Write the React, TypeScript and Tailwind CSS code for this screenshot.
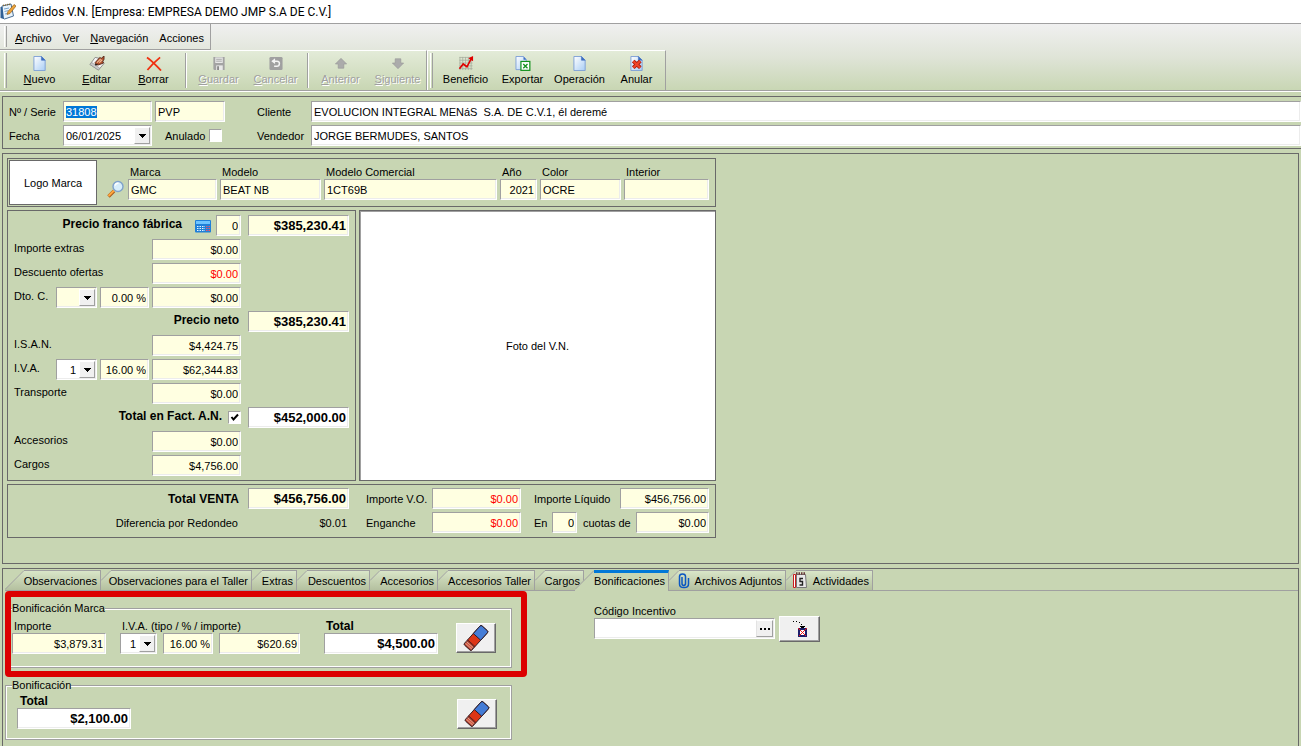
import { useEffect, useRef, type ReactNode } from "react";

const FIELD =
  "block h-[21px] rounded-none border border-t-[#a0a0a0] border-l-[#a0a0a0] border-r-white border-b-white px-0.5 py-0 outline-none shadow-[inset_-1px_-1px_0_#ececec] selection:bg-[#0078d7] selection:text-white";
const PANEL = "border border-[#696969]";

type FieldProps = {
  label: string;
  value?: string;
  width: string;
  tone?: string;
  align?: string;
  id?: string;
};

function Field({ label, value = "", width, tone = "bg-[#ffffe1]", align = "text-right", id }: FieldProps) {
  return (
    <input id={id} aria-label={id ? undefined : label} defaultValue={value} className={`${FIELD} ${width} ${tone} ${align}`} />
  );
}

function Combo({
  label,
  options,
  width,
  tone = "bg-white",
  align = "[text-align-last:right]",
  id,
}: {
  label: string;
  options: string[];
  width: string;
  tone?: string;
  align?: string;
  id?: string;
}) {
  return (
    <div className={`relative ${width}`}>
      <select id={id} aria-label={id ? undefined : label} className={`${FIELD} w-full appearance-none pr-5 ${tone} ${align}`}>
        {options.map((o) => (
          <option key={o}>{o}</option>
        ))}
      </select>
      <span className="pointer-events-none absolute top-0.5 right-0.5 flex h-[17px] w-4 items-center justify-center border border-t-white border-l-white border-r-[#a0a0a0] border-b-[#a0a0a0] bg-[#f0f0f0]">
        <svg width="7" height="4" shapeRendering="crispEdges">
          <path d="M0 0h7v1H6v1H5v1H4v1H3V3H2V2H1V1H0z" fill="#000" />
        </svg>
      </span>
    </div>
  );
}

function Check({ id, checked = false }: { id: string; checked?: boolean }) {
  return (
    <span className="relative block size-[13px]">
      <input
        id={id}
        type="checkbox"
        defaultChecked={checked}
        className="peer block size-[13px] appearance-none border border-t-[#a0a0a0] border-l-[#a0a0a0] border-r-white border-b-white bg-white"
      />
      <svg className="pointer-events-none absolute inset-0 hidden peer-checked:block" width="13" height="13">
        <path d="M3.500 6L5.500 8.500L10 3.500" fill="none" stroke="#000" strokeWidth="2" />
      </svg>
    </span>
  );
}

function PageShape() {
  return (
    <g>
      <path d="M1.500 .5h8l4 4v11h-12z" fill="url(#sheet)" stroke="#7d9fd6" />
      <path d="M9.500 .5v4h4z" fill="#3f6fc0" stroke="#3f6fc0" strokeWidth=".6" />
    </g>
  );
}

function Svg16({ children }: { children: ReactNode }) {
  return (
    <svg width="16" height="16" viewBox="0 0 16 16" aria-hidden="true">
      <defs>
        <linearGradient id="sheet" x1="0" y1="0" x2="1" y2="1">
          <stop offset="0" stopColor="#ffffff" />
          <stop offset="1" stopColor="#a9cdf5" />
        </linearGradient>
      </defs>
      {children}
    </svg>
  );
}

const icons = {
  nuevo: <PageShape />,
  editar: (
    <>
      <path d="M6 1.500L13 3l2.500 5L9.500 15L.5 9z" fill="#f4f4f4" stroke="#8b8b8b" />
      <path d="M.5 9l9 6 1.500-2L2.500 7z" fill="#c9c9c9" stroke="#8b8b8b" strokeWidth=".6" />
      <path d="M6.500 9.500l-.5-2.500L11 1.500l1.500 1L15.500 0v3.500L14 6l1 1.500L9.500 9.500z" fill="#b5532f" stroke="#4e2518" strokeWidth=".9" />
      <path d="M8 7l4-4M10.500 7l3-3" stroke="#f2bd98" strokeWidth="1.200" />
      <path d="M6 9.500l2.500-1" stroke="#222" strokeWidth="1.200" />
    </>
  ),
  borrar: <path d="M.5 1.500C6 5 10 10 15.500 15.500M14.500 1.500C9 6 5 10 1 15" fill="none" stroke="#f03010" strokeWidth="1.900" />,
  guardar: (
    <>
      <path d="M2 1h12v14H3l-1-1z" fill="#a3a3a3" />
      <path d="M4 1.500h8v6H4z" fill="#e8e8e8" />
      <path d="M5 3.500h6M5 5.500h6" stroke="#a3a3a3" />
      <path d="M5 10h7v5H5z" fill="#e8e8e8" />
      <path d="M6 11h2v4H6z" fill="#8a8a8a" />
    </>
  ),
  cancelar: (
    <>
      <rect x="1" y="1" width="14" height="14" rx="1.500" fill="#a0a0a0" />
      <path d="M4.500 5.500h4.500c4 0 3 5.500 0 5.500H6" fill="none" stroke="#f4f4f4" strokeWidth="1.600" />
      <path d="M3 5.500L7 2.500v6z" fill="#f4f4f4" />
    </>
  ),
  anterior: <path d="M8 2.500l6 6h-3V13H5V8.500H2z" fill="#ababab" stroke="#999" strokeWidth=".7" />,
  siguiente: <path d="M8 13.500l6-6h-3V3H5v4.500H2z" fill="#ababab" stroke="#999" strokeWidth=".7" />,
  beneficio: (
    <>
      <path d="M1 1.500h14M1 4.500h14M1 7.500h14M1 10.500h14M1 13.500h14M1.500 1v14M4.500 1v14M7.500 1v14M10.500 1v14M13.500 1v14" stroke="#a5ab9c" strokeWidth=".8" />
      <path d="M1 13.500L5 8.500l4 3L13.500 3" fill="none" stroke="#e00000" strokeWidth="1.800" />
      <path d="M15.500 0v5.500L10.500 2.500z" fill="#e00000" />
    </>
  ),
  exportar: (
    <>
      <path d="M.5 .5h8l3 3v11H.5z" fill="url(#sheet)" stroke="#7d9fd6" />
      <path d="M8.500 .5v3.500h3z" fill="#3f6fc0" />
      <rect x="5.800" y="5.800" width="9.500" height="9.500" fill="#fff" stroke="#12911c" strokeWidth="1.300" />
      <path d="M8.300 8.500l4.500 4.500M12.800 8.500L8.300 13" stroke="#12911c" strokeWidth="1.400" />
    </>
  ),
  operacion: <PageShape />,
  anular: (
    <>
      <PageShape />
      <path d="M4 5.500l7.500 7M11.500 5.500L4 12.500" stroke="#9c160b" strokeWidth="4" />
      <path d="M4 5.500l7.500 7M11.500 5.500L4 12.500" stroke="#f04427" strokeWidth="2.400" />
    </>
  ),
};

function Tool({ icon, text, accel = true, disabled = false }: { icon: ReactNode; text: string; accel?: boolean; disabled?: boolean }) {
  return (
    <button
      type="button"
      disabled={disabled}
      className={`flex h-9 w-[57px] flex-col items-center pt-[5px] ${disabled ? "text-[#a0a0a0] [text-shadow:1px_1px_0_#fff]" : "text-black"}`}
    >
      <Svg16>{icon}</Svg16>
      <span className="leading-4">{accel ? <><u>{text[0]}</u>{text.slice(1)}</> : text}</span>
    </button>
  );
}

function Grip() {
  return <span className="my-0.5 w-[3px] self-stretch border-r border-l border-l-white border-r-[#a0a0a0]" />;
}

function Separator() {
  return <span className="mx-[3px] my-0.5 w-0.5 self-stretch border-r border-l border-l-[#a0a0a0] border-r-white" />;
}

function MenuBar() {
  return (
    <nav className="flex h-[26px] w-[211px] items-center border-r border-b border-[#a0a0a0] pl-1 leading-4">
      <Grip />
      <div className="flex gap-[11px] pt-[3px] pl-2">
        <a href="#archivo"><u>A</u>rchivo</a>
        <a href="#ver">Ver</a>
        <a href="#navegacion"><u>N</u>avegación</a>
        <a href="#acciones">Acciones</a>
      </div>
    </nav>
  );
}

function ToolBars() {
  return (
    <div className="flex h-[41px] border-b border-[#a0a0a0] shadow-[0_1px_0_#fff]">
      <div className="flex items-start border-t border-r border-t-white border-r-[#a0a0a0] bg-linear-to-b from-[#e3ebd8] to-[#c8d6b3] pl-1">
        <Grip />
        <div className="ml-1 flex self-stretch">
          <Tool icon={icons.nuevo} text="Nuevo" />
          <Tool icon={icons.editar} text="Editar" />
          <Tool icon={icons.borrar} text="Borrar" />
          <Separator />
          <Tool icon={icons.guardar} text="Guardar" disabled />
          <Tool icon={icons.cancelar} text="Cancelar" disabled />
          <Separator />
          <Tool icon={icons.anterior} text="Anterior" disabled />
          <Tool icon={icons.siguiente} text="Siguiente" disabled />
        </div>
      </div>
      <div className="flex items-start border-t border-r border-l border-t-white border-r-[#a0a0a0] border-l-white bg-linear-to-b from-[#e3ebd8] to-[#c8d6b3] pl-0.5">
        <Grip />
        <div className="ml-1 flex">
          <Tool icon={icons.beneficio} text="Beneficio" accel={false} />
          <Tool icon={icons.exportar} text="Exportar" accel={false} />
          <Tool icon={icons.operacion} text="Operación" accel={false} />
          <Tool icon={icons.anular} text="Anular" accel={false} />
        </div>
      </div>
    </div>
  );
}

function OrderHeader() {
  const serie = useRef<HTMLInputElement>(null);
  useEffect(() => {
    serie.current?.focus();
    serie.current?.select();
  }, []);
  return (
    <section className="mt-[5px] ml-0.5 flex flex-col gap-[3px] border border-r-0 border-[#696969] pt-1 pb-0.5">
      <div className="flex h-[21px] items-center">
        <label htmlFor="serie" className="w-[60px] pl-1.5">Nº / Serie</label>
        <input id="serie" ref={serie} defaultValue="31808" className={`${FIELD} w-[89px] bg-[#ffffe1]`} />
        <div className="ml-[3px] w-[102px]"><Field label="Tipo" value="PVP" width="w-[70px]" align="text-left" /></div>
        <label htmlFor="cliente" className="w-[54px]">Cliente</label>
        <Field id="cliente" label="Cliente" value="EVOLUCION INTEGRAL MENáS  S.A. DE C.V.1, él deremé" width="flex-1" tone="bg-white" align="text-left" />
      </div>
      <div className="flex h-[21px] items-center">
        <label htmlFor="fecha" className="w-[60px] pl-1.5">Fecha</label>
        <Combo id="fecha" label="Fecha" options={["06/01/2025"]} width="w-[89px]" align="text-left" />
        <div className="ml-[3px] flex w-[102px] items-center gap-1 pl-2.5">
          <label htmlFor="anulado">Anulado</label>
          <Check id="anulado" />
        </div>
        <label htmlFor="vendedor" className="w-[54px]">Vendedor</label>
        <Field id="vendedor" label="Vendedor" value="JORGE BERMUDES, SANTOS" width="flex-1" tone="bg-white" align="text-left" />
      </div>
    </section>
  );
}

function Stacked({ id, label, value, width, align = "text-left" }: { id: string; label: string; value?: string; width: string; align?: string }) {
  return (
    <div>
      <label htmlFor={id} className="block pl-0.5 leading-[14px]">{label}</label>
      <Field id={id} label={label} value={value} width={width} align={align} />
    </div>
  );
}

function Vehicle() {
  return (
    <section className={`flex h-[49px] w-[709px] ${PANEL} p-px`}>
      <div className="flex w-[88px] items-center justify-center border border-[#696969] bg-white">Logo Marca</div>
      <button type="button" aria-label="Buscar vehículo" className="mt-5 ml-2.5 size-[18px]">
        <svg width="18" height="18" viewBox="0 0 18 18">
          <path d="M1.500 16.500L7 11" stroke="#a85a1c" strokeWidth="3.400" />
          <path d="M1.500 16L7 10.500" stroke="#ffa63d" strokeWidth="2" />
          <circle cx="11" cy="6.500" r="5" fill="#d7eefb" stroke="#7fa2cb" strokeWidth="1.400" />
          <path d="M8 5.500c.5-2 2-2.500 3.500-2.300" stroke="#fff" strokeWidth="1.500" fill="none" />
        </svg>
      </button>
      <div className="ml-[3px] flex gap-[3px] pt-[5px]">
        <Stacked id="marca" label="Marca" value="GMC" width="w-[89px]" />
        <Stacked id="modelo" label="Modelo" value="BEAT NB" width="w-[101px]" />
        <Stacked id="comercial" label="Modelo Comercial" value="1CT69B" width="w-[173px]" />
        <Stacked id="anio" label="Año" value="2021" width="w-[37px]" align="text-right" />
        <Stacked id="color" label="Color" value="OCRE" width="w-[81px]" />
        <Stacked id="interior" label="Interior" width="w-[85px]" />
      </div>
    </section>
  );
}

function PriceRow({ label, amount, tone = "text-black", children }: { label: string; amount: string; tone?: string; children?: ReactNode }) {
  return (
    <div className="flex h-6 w-[233px]">
      <span className="flex-1 pl-1.5 leading-[18px]">{label}</span>
      <div className="flex gap-[3px]">
        {children}
        <Field label={label} value={amount} width="w-[89px]" tone={`bg-[#ffffe1] ${tone}`} />
      </div>
    </div>
  );
}

function TotalRow({ label, amount, tone = "bg-[#ffffe1]", children }: { label: ReactNode; amount: string; tone?: string; children?: ReactNode }) {
  return (
    <div className="flex h-6 gap-[7px] font-bold">
      <div className="flex w-[233px] justify-end">
        <span className="pr-0.5 text-xs leading-[18px]">{label}</span>
        {children}
      </div>
      <Field label="Total" value={amount} width="w-[101px] text-[13px] font-bold" tone={tone} />
    </div>
  );
}

function Prices() {
  return (
    <section className={`w-[349px] ${PANEL} pt-1`}>
      <TotalRow label="Precio franco fábrica" amount="$385,230.41">
        <button type="button" aria-label="Calcular" className="mt-0.5 mr-1 ml-2.5 size-[18px]">
          <svg width="18" height="18" viewBox="0 0 18 18">
            <rect x="1" y="3" width="16" height="12.500" rx="1" fill="#1f7fd8" />
            <path d="M2 4h14v3H2z" fill="#6ec4ff" />
            <path d="M3 9.500h8M3 11.500h8M3 13.500h8" stroke="#e6f5ff" strokeWidth="1.200" strokeDasharray="1.500 1" />
            <path d="M12 9.500h4M12 11.500h4M12 13.500h4" stroke="#e8556a" strokeWidth="1.200" strokeDasharray="1.500 1" />
          </svg>
        </button>
        <Field label="Tarifa" value="0" width="w-[25px] font-normal" />
      </TotalRow>
      <PriceRow label="Importe extras" amount="$0.00" />
      <PriceRow label="Descuento ofertas" amount="$0.00" tone="text-[#ff0000]" />
      <PriceRow label="Dto. C." amount="$0.00">
        <Combo label="Tipo de descuento" options={[""]} width="w-[41px]" tone="bg-[#ffffe1]" />
        <Field label="Porcentaje de descuento" value="0.00 %" width="w-[49px]" />
      </PriceRow>
      <TotalRow label="Precio neto" amount="$385,230.41" />
      <PriceRow label="I.S.A.N." amount="$4,424.75" />
      <PriceRow label="I.V.A." amount="$62,344.83">
        <Combo label="Tipo de I.V.A." options={["1"]} width="w-[41px]" />
        <Field label="Porcentaje de I.V.A." value="16.00 %" width="w-[49px]" />
      </PriceRow>
      <PriceRow label="Transporte" amount="$0.00" />
      <TotalRow label={<label htmlFor="factura">Total en Fact. A.N.</label>} amount="$452,000.00" tone="bg-white">
        <span className="mt-1 ml-1"><Check id="factura" checked /></span>
      </TotalRow>
      <PriceRow label="Accesorios" amount="$0.00" />
      <PriceRow label="Cargos" amount="$4,756.00" />
    </section>
  );
}

function Totals() {
  return (
    <section className={`flex h-[54px] w-[709px] flex-col gap-[3px] ${PANEL} pt-[3px]`}>
      <div className="flex h-[21px] items-center">
        <span className="w-[233px] pr-0.5 text-right text-xs font-bold">Total VENTA</span>
        <div className="ml-[7px] w-[118px]"><Field label="Total VENTA" value="$456,756.00" width="w-[101px] text-[13px] font-bold" /></div>
        <label htmlFor="vo" className="w-[66px]">Importe V.O.</label>
        <Field id="vo" label="Importe V.O." value="$0.00" width="w-[89px]" tone="bg-[#ffffe1] text-[#ff0000]" />
        <label htmlFor="liquido" className="ml-[13px] w-[86px]">Importe Líquido</label>
        <Field id="liquido" label="Importe Líquido" value="$456,756.00" width="w-[89px]" />
      </div>
      <div className="flex h-[21px] items-center">
        <span className="w-[233px] pr-[3px] text-right">Diferencia por Redondeo</span>
        <div className="ml-[7px] w-[118px]"><output className="block w-[99px] text-right">$0.01</output></div>
        <label htmlFor="enganche" className="w-[66px]">Enganche</label>
        <Field id="enganche" label="Enganche" value="$0.00" width="w-[89px]" tone="bg-[#ffffe1] text-[#ff0000]" />
        <label htmlFor="cuotas" className="ml-[13px] w-[18px]">En</label>
        <Field id="cuotas" label="Cuotas" value="0" width="w-[25px]" />
        <label htmlFor="cuota" className="ml-1.5 w-[53px]">cuotas de</label>
        <Field id="cuota" label="cuotas de" value="$0.00" width="w-[73px]" />
      </div>
    </section>
  );
}

const tabs = [
  { text: "Observaciones", width: "w-[96px]", wide: true },
  { text: "Observaciones para el Taller", width: "w-[151px]" },
  { text: "Extras", width: "w-[45px]" },
  { text: "Descuentos", width: "w-[73px]" },
  { text: "Accesorios", width: "w-[68px]" },
  { text: "Accesorios Taller", width: "w-[97px]" },
  { text: "Cargos", width: "w-[49px]" },
  { text: "Bonificaciones", width: "-ml-[9px] w-[94px]", active: true, wide: true },
  { text: "Archivos Adjuntos", width: "w-[117px]", icon: "clip" },
  { text: "Actividades", width: "w-[87px]", icon: "agenda" },
];

function Clip() {
  return (
    <svg width="12" height="16" viewBox="0 0 12 16" className="shrink-0">
      <path d="M4 4v6.500c0 2.500 3.500 2.500 3.500 0V3.500c0-3.500-6-3.500-6 0V11c0 4.800 9 4.800 9 0V5" fill="none" stroke="#0b57c2" strokeWidth="1.500" />
    </svg>
  );
}

function Agenda() {
  return (
    <svg width="16" height="17" viewBox="0 0 16 17" className="shrink-0">
      <path d="M1.500 2.500h2v13h-2z" fill="#fff" stroke="#c81e1e" />
      <path d="M4.500 2.500h9l1 13h-10z" fill="#e9e9e9" stroke="#777" />
      <path d="M4 1.500h10" stroke="#6b3a3a" strokeWidth="2.400" strokeDasharray="1.500 1" />
      <path d="M11 6.500H8V9.500h2.500V13H7.500" fill="none" stroke="#222" strokeWidth="1.400" />
    </svg>
  );
}

function Slant({ wide = false, active = false }: { wide?: boolean; active?: boolean }) {
  const w = wide ? 19 : 10;
  return (
    <svg width={w} height="21" className="shrink-0">
      <defs>
        <linearGradient id="tabfill" gradientUnits="userSpaceOnUse" x1="0" y1="0" x2="0" y2="20">
          <stop offset="0" stopColor="#d9e6c8" />
          <stop offset="1" stopColor="#b4c09f" />
        </linearGradient>
      </defs>
      <path d={`M0 ${w}L${w} 0V21H0z`} fill={active ? "#c8d6b3" : "url(#tabfill)"} />
      {!active && <path d={`M0 20.500H${w}`} stroke="#a0a0a0" />}
      <path d={`M0 ${w + 0.5}L${w} .5`} stroke="#a0a0a0" fill="none" />
    </svg>
  );
}

function Tab({ text, width, active = false, wide = false, icon }: { text: string; width: string; active?: boolean; wide?: boolean; icon?: string }) {
  return (
    <button type="button" role="tab" aria-selected={active} className={`flex h-[21px] ${width}`}>
      <Slant wide={wide} active={active} />
      <span
        className={`flex h-full min-w-0 flex-1 items-center justify-end gap-[5px] border-r border-[#a0a0a0] pr-[3px] whitespace-nowrap ${
          active ? "border-t-3 border-t-[#0078d7] bg-[#c8d6b3] pb-0.5" : "border-t border-b bg-linear-to-b from-[#d9e6c8] to-[#b4c09f]"
        }`}
      >
        {icon === "clip" && <Clip />}
        {icon === "agenda" && <Agenda />}
        {text}
      </span>
    </button>
  );
}

const RAISED =
  "flex items-center justify-center border border-t-white border-l-white border-r-[#696969] border-b-[#696969] bg-[#f0f0f0] shadow-[inset_-1px_-1px_0_#a0a0a0]";

function EraseButton() {
  return (
    <button type="button" aria-label="Borrar bonificación" className={`${RAISED} h-[30px] w-10`}>
      <svg width="26" height="26" viewBox="0 0 26 26">
        <g transform="rotate(-48 13 13)" stroke="#2c1c24" strokeWidth=".9">
          <rect x="0" y="8" width="26" height="10" rx="1.500" fill="#dd3516" />
          <path d="M14.500 8h10q1.500 0 1.500 1.500v7q0 1.500-1.500 1.500h-10z" fill="#447cd6" />
          <path d="M.5 8.500h4.500v9H.5z" fill="#d8543c" strokeWidth=".5" />
          <path d="M2 8.500v9M4 8.500v9" stroke="#d6b0a0" strokeWidth=".8" />
          <path d="M6 8v10" strokeWidth=".7" />
        </g>
      </svg>
    </button>
  );
}

const GROUP = "flex border border-[#a0a0a0] shadow-[inset_0_0_0_1px_#fff]";

function Bonuses() {
  return (
    <div className="flex items-start pl-0.5">
      <div className="w-[507px]">
        <div className="relative pt-[11px]">
          <fieldset className={`${GROUP} h-[66px]`}>
            <legend className="ml-1.5 bg-[#c8d6b3] leading-[13px]">Bonificación Marca</legend>
            <div className="flex pt-1 pl-1.5">
              <div className="w-[108px]"><Stacked id="importe" label="Importe" value="$3,879.31" width="w-[94px]" align="text-right" /></div>
              <div className="w-[204px]">
                <label htmlFor="tipo" className="block pl-0.5 leading-[14px]">I.V.A. (tipo / % / importe)</label>
                <div className="flex gap-1.5">
                  <Combo id="tipo" label="Tipo" options={["1"]} width="w-[37px]" />
                  <Field label="Porcentaje" value="16.00 %" width="w-[50px]" />
                  <Field label="Importe I.V.A." value="$620.69" width="w-[81px]" />
                </div>
              </div>
              <div>
                <label htmlFor="totalmarca" className="block pl-0.5 text-xs leading-[14px] font-bold">Total</label>
                <Field id="totalmarca" label="Total" value="$4,500.00" width="w-[114px] text-[13px] font-bold" tone="bg-white" />
              </div>
              <div className="pt-1 pl-[18px]"><EraseButton /></div>
            </div>
          </fieldset>
          <div className="pointer-events-none absolute top-0 -right-[15px] left-0 h-[86px] rounded-[4px] border-[6px] border-[#dc0000]" />
        </div>
        <fieldset className={`${GROUP} mt-[11px] h-[61px]`}>
          <legend className="ml-1.5 bg-[#c8d6b3] leading-[13px]">Bonificación</legend>
          <div className="flex w-full justify-between pt-0.5 pr-3.5 pl-[11px]">
            <div>
              <label htmlFor="totalbon" className="block pl-[3px] text-xs leading-[14px] font-bold">Total</label>
              <Field id="totalbon" label="Total" value="$2,100.00" width="w-[114px] text-[13px] font-bold" tone="bg-white" />
            </div>
            <div className="pt-[5px]"><EraseButton /></div>
          </div>
        </fieldset>
      </div>
      <div className="ml-[82px] pt-[13px]">
        <label htmlFor="incentivo" className="block leading-[14px]">Código Incentivo</label>
        <div className="flex gap-1">
          <div className="relative w-[181px]">
            <Field id="incentivo" label="Código Incentivo" width="w-full" tone="bg-white" align="text-left" />
            <button type="button" aria-label="Elegir código" className="absolute top-0.5 right-0.5 flex h-[17px] w-[17px] items-center justify-center gap-0.5 border border-t-white border-l-[#e3e3e3] border-r-[#a0a0a0] border-b-[#a0a0a0] bg-[#f0f0f0]">
              <i className="size-0.5 bg-black" />
              <i className="size-0.5 bg-black" />
              <i className="size-0.5 bg-black" />
            </button>
          </div>
          <button type="button" aria-label="Aplicar incentivo" className={`${RAISED} -mt-0.5 h-[26px] w-[41px]`}>
            <svg width="16" height="18" viewBox="0 0 16 18" shapeRendering="crispEdges">
              <path d="M1 1h1v1H1zM4 1h1v1H4zM7 2h1v1H7zM9 4h1v1H9z" fill="#000" />
              <path d="M7 6h7l-3.500 3z" fill="#000" />
              <rect x="7" y="9" width="7" height="7" fill="#fff" stroke="#1d1d6b" strokeWidth="1.500" />
              <path d="M6.500 8.500l8 8M14.500 8.500l-8 8" stroke="#f01818" strokeWidth="1.200" />
            </svg>
          </button>
        </div>
      </div>
    </div>
  );
}

export default function App() {
  return (
    <div className="flex min-h-screen flex-col overflow-hidden bg-[#c8d6b3] font-['Liberation_Sans',sans-serif] text-[11px] leading-[14px] text-black">
      <header className="flex h-6 items-center gap-[5px] border-b border-[#a0a0a0] bg-white font-['Roboto',sans-serif] text-xs">
        <svg width="16" height="17" viewBox="0 0 16 17" aria-hidden="true">
          <path d="M2 3l9-2 2.500 12-9 3-3-2z" fill="#e9f3fb" stroke="#4b6f94" />
          <path d="M.5 4v11l3.500 1-1.500-12z" fill="#2f6096" />
          <path d="M3 2.500l8-1.500" stroke="#8a6a30" strokeWidth="1.500" strokeDasharray="1 1" />
          <path d="M4 6l5-1M4.500 8.500l4-1M5 11l4-1" stroke="#7ba6cd" />
          <path d="M7 11.500l1-3 6-7 2 1.500-6 7.500z" fill="#eda33a" stroke="#94621c" strokeWidth=".7" />
        </svg>
        <h1>Pedidos V.N. [Empresa: EMPRESA DEMO JMP S.A DE C.V.]</h1>
      </header>
      <div className="bg-linear-to-b from-[#f0f0f0] via-[#dfe4d7] to-[#c8d6b3]">
        <MenuBar />
        <ToolBars />
      </div>
      <OrderHeader />
      <main className={`mt-1 mr-0.5 ml-0.5 flex h-[411px] flex-col gap-[3px] ${PANEL} p-1`}>
        <Vehicle />
        <div className="flex h-[271px] gap-[3px]">
          <Prices />
          <div className="flex w-[357px] items-center justify-center border border-[#696969] bg-white shadow-[inset_1px_1px_0_#a0a0a0]">Foto del V.N.</div>
        </div>
        <Totals />
      </main>
      <section className="mt-1 mr-0.5 ml-0.5 flex-1 border border-b-0 border-[#696969]">
        <div role="tablist" className="flex pt-px pl-0.5">
          {tabs.map((t) => (
            <Tab key={t.text} {...t} />
          ))}
          <span className="flex-1 border-b border-[#a0a0a0]" />
        </div>
        <Bonuses />
      </section>
    </div>
  );
}
